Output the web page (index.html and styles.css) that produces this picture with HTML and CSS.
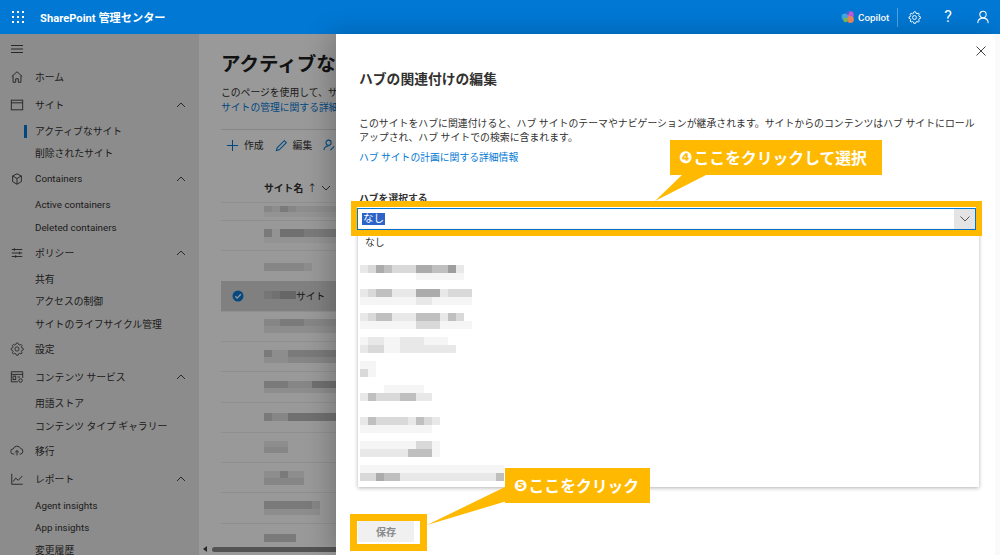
FILE: index.html
```html
<!DOCTYPE html>
<html lang="ja">
<head>
<meta charset="utf-8">
<title>SharePoint 管理センター</title>
<link rel="stylesheet" href="styles.css">
</head>
<body>
<header class="topbar">
  <svg class="waffle" width="14" height="14" viewBox="0 0 14 14"><g fill="#fff"><rect x="1" y="1" width="2" height="2"/><rect x="6" y="1" width="2" height="2"/><rect x="11" y="1" width="2" height="2"/><rect x="1" y="6" width="2" height="2"/><rect x="6" y="6" width="2" height="2"/><rect x="11" y="6" width="2" height="2"/><rect x="1" y="11" width="2" height="2"/><rect x="6" y="11" width="2" height="2"/><rect x="11" y="11" width="2" height="2"/></g></svg>
  <span class="brand">SharePoint 管理センター</span>
  <div class="top-actions">
    <svg class="copilot" width="14" height="14" viewBox="0 0 14 14"><circle cx="4" cy="7" r="3.4" fill="#3fa9e0"/><circle cx="9.5" cy="4.5" r="3.2" fill="#c45ad0"/><circle cx="9.5" cy="9.5" r="3.4" fill="#e8885a"/><circle cx="4.6" cy="10" r="2.2" fill="#7bb85a"/><circle cx="6.4" cy="2.8" r="1.8" fill="#2f6fd0"/></svg>
    <span class="copilot-label">Copilot</span>
    <span class="top-sep"></span>
    <svg class="top-gear" width="13" height="13" viewBox="0 0 16 16" fill="none" stroke="#fff" stroke-width="1.2"><path d="M8 1.2l1.3.2.5 1.7 1.3.6 1.6-.8 1.2 1.3-.8 1.6.5 1.2 1.7.6v1.8l-1.7.6-.5 1.2.8 1.6-1.2 1.3-1.6-.8-1.3.6-.5 1.7H7.2l-.5-1.7-1.3-.6-1.6.8-1.2-1.3.8-1.6-.5-1.2-1.7-.6V7.8l1.7-.6.5-1.2-.8-1.6 1.2-1.3 1.6.8 1.3-.6.5-1.7z" transform="translate(0 -.4)"/><circle cx="8" cy="8" r="2.4"/></svg>
    <span class="top-help">?</span>
    <svg class="top-user" width="12" height="14" viewBox="0 0 14 15" fill="none" stroke="#fff" stroke-width="1.2"><circle cx="7" cy="4.6" r="3.7"/><path d="M.8 14.6c.3-3.6 2.8-5.8 6.2-5.8s5.900 2.200 6.200 5.800"/></svg>
  </div>
</header>

<div class="app">
  <nav class="nav">
    <div class="nav-burger"><svg width="12" height="8" viewBox="0 0 12 8" fill="none" stroke="#444" stroke-width="1"><path d="M0 .5h12M0 4h12M0 7.500h12"/></svg></div>
    <div class="nav-item"><svg class="nav-ico" viewBox="0 0 16 16" fill="none" stroke="#444" stroke-width="1.100"><path d="M2 7.500L8 2l6 5.500M3.500 6.500V14h3v-4h3v4h3V6.500"/></svg>ホーム</div>
    <div class="nav-item"><svg class="nav-ico" viewBox="0 0 16 16" fill="none" stroke="#444" stroke-width="1.100"><rect x="1.500" y="2.500" width="13" height="11"/><path d="M1.500 5.500h13"/></svg>サイト<svg class="chev" viewBox="0 0 10 6" fill="none" stroke="#444" stroke-width="1"><path d="M1 5l4-4 4 4"/></svg></div>
    <div class="sub-list">
      <div class="sub active">アクティブなサイト</div>
      <div class="sub">削除されたサイト</div>
    </div>
    <div class="nav-item"><svg class="nav-ico" viewBox="0 0 16 16" fill="none" stroke="#444" stroke-width="1.100"><path d="M8 2l5 2.500v6.500L8 14l-5-3V4.500zM3 4.500L8 7.500l5-3M8 7.500V14"/></svg>Containers<svg class="chev" viewBox="0 0 10 6" fill="none" stroke="#444" stroke-width="1"><path d="M1 5l4-4 4 4"/></svg></div>
    <div class="sub-list">
      <div class="sub">Active containers</div>
      <div class="sub">Deleted containers</div>
    </div>
    <div class="nav-item"><svg class="nav-ico" viewBox="0 0 16 16" fill="none" stroke="#444" stroke-width="1.100"><path d="M2 4h12M2 8h12M2 12h12"/><path d="M5 2.500v3M11 6.500v3M6.500 10.500v3"/></svg>ポリシー<svg class="chev" viewBox="0 0 10 6" fill="none" stroke="#444" stroke-width="1"><path d="M1 5l4-4 4 4"/></svg></div>
    <div class="sub-list">
      <div class="sub">共有</div>
      <div class="sub">アクセスの制御</div>
      <div class="sub">サイトのライフサイクル管理</div>
    </div>
    <div class="nav-item"><svg class="nav-ico" viewBox="0 0 16 16" fill="none" stroke="#444" stroke-width="1"><path d="M8 1.500l1.300.2.500 1.600 1.300.6 1.500-.8 1.200 1.300-.8 1.500.5 1.200 1.600.6v1.800l-1.600.6-.5 1.200.8 1.500-1.200 1.300-1.500-.8-1.300.6-.5 1.600H7.200l-.5-1.600-1.300-.6-1.500.8-1.200-1.300.8-1.500-.5-1.200-1.600-.6V7.700l1.600-.6.5-1.200-.8-1.500 1.200-1.300 1.500.8 1.300-.6.500-1.600z" transform="translate(0 -.4)"/><circle cx="8" cy="8" r="2.400"/></svg>設定</div>
    <div class="nav-item"><svg class="nav-ico" viewBox="0 0 16 16" fill="none" stroke="#444" stroke-width="1.100"><path d="M9 13.500H1.500V2h13v7"/><path d="M1.500 5h13"/><rect x="3.500" y="7" width="3" height="4"/><path d="M8.500 8h3"/><circle cx="12" cy="12" r="2"/></svg>コンテンツ サービス<svg class="chev" viewBox="0 0 10 6" fill="none" stroke="#444" stroke-width="1"><path d="M1 5l4-4 4 4"/></svg></div>
    <div class="sub-list">
      <div class="sub">用語ストア</div>
      <div class="sub">コンテンツ タイプ ギャラリー</div>
    </div>
    <div class="nav-item"><svg class="nav-ico" viewBox="0 0 16 16" fill="none" stroke="#444" stroke-width="1.100"><path d="M5 11.500H4a3 3 0 0 1-.3-6A4.500 4.500 0 0 1 12 5 3.300 3.300 0 0 1 12 11.500h-1"/><path d="M8 13V7.500M5.800 9.500L8 7.500l2.200 2"/></svg>移行</div>
    <div class="nav-item"><svg class="nav-ico" viewBox="0 0 16 16" fill="none" stroke="#444" stroke-width="1.100"><path d="M2 2v12h12.500M3.500 11l3-4 3 2.500 4.500-5"/></svg>レポート<svg class="chev" viewBox="0 0 10 6" fill="none" stroke="#444" stroke-width="1"><path d="M1 5l4-4 4 4"/></svg></div>
    <div class="sub-list">
      <div class="sub">Agent insights</div>
      <div class="sub">App insights</div>
      <div class="sub">変更履歴</div>
    </div>
  </nav>

  <main class="main">
    <h1 class="page-title">アクティブなサイト</h1>
    <p class="page-desc">このページを使用して、サイトを管理します。</p>
    <a class="page-link">サイトの管理に関する詳細情報</a>
    <div class="toolbar">
      <span class="tool"><svg class="tool-ico" viewBox="0 0 14 14" fill="none" stroke="#0078d4" stroke-width="1.100"><path d="M7 1v12M1 7h12"/></svg>作成</span>
      <span class="tool"><svg class="tool-ico" viewBox="0 0 14 14" fill="none" stroke="#0078d4" stroke-width="1.100"><path d="M1.500 12.500l.8-3L10 1.800l2.200 2.200-7.700 7.700z"/></svg>編集</span>
      <span class="tool"><svg class="tool-ico" viewBox="0 0 14 14" fill="none" stroke="#0078d4" stroke-width="1.100"><circle cx="6" cy="4" r="2.800"/><path d="M1 12c.4-3 2.400-4.500 5-4.500M8 12l4-4"/></svg></span>
    </div>
    <div class="table-head">サイト名 <span class="sort">↑</span> <svg class="head-chev" viewBox="0 0 10 6" fill="none" stroke="#444" stroke-width="1"><path d="M1 1l4 4 4-4"/></svg></div>
    <div class="rows">
      <div class="row row-first"><svg class="mos" width="80" height="16" viewBox="0 0 80 16"><rect class="c" y="2" width="8" height="6"/><rect class="b" x="8" y="2" width="8" height="6"/><rect class="d" x="16" y="2" width="8" height="6"/><rect class="c" x="24" y="2" width="8" height="6"/><rect class="b" x="32" y="2" width="40" height="6"/><rect class="a" y="8" width="72" height="5"/></svg></div>
      <div class="row"><svg class="mos" width="80" height="16" viewBox="0 0 80 16"><rect class="d" y="1" width="8" height="8"/><rect class="a" x="8" y="1" width="8" height="8"/><rect class="e" x="16" y="1" width="24" height="8"/><rect class="d" x="40" y="1" width="32" height="8"/><rect class="a" y="9" width="72" height="6"/></svg></div>
      <div class="row"><svg class="mos" width="80" height="16" viewBox="0 0 80 16"><rect class="c" y="5" width="40" height="8"/><rect class="b" x="40" y="5" width="8" height="8"/></svg></div>
      <div class="row row-selected">
        <svg class="check" width="12" height="12" viewBox="0 0 12 12"><circle cx="6" cy="6" r="5.500" fill="#0c78d4"/><path d="M3.300 6.200l1.900 1.900 3.600-3.800" fill="none" stroke="#fff" stroke-width="1.300"/></svg>
        <svg class="mos mos-sel" width="32" height="16" viewBox="0 0 32 16"><rect class="b" y="3" width="8" height="8"/><rect class="c" x="8" y="3" width="8" height="8"/><rect class="d" x="16" y="3" width="16" height="8"/></svg>
        <span class="row-text">サイト</span>
      </div>
      <div class="row"><svg class="mos" width="80" height="16" viewBox="0 0 80 16"><rect class="c" y="1" width="16" height="7"/><rect class="d" x="16" y="1" width="24" height="7"/><rect class="c" x="40" y="1" width="32" height="7"/><rect class="b" y="8" width="72" height="7"/></svg></div>
      <div class="row"><svg class="mos" width="80" height="16" viewBox="0 0 80 16"><rect class="d" y="1" width="8" height="7"/><rect class="b" x="8" y="1" width="16" height="7"/><rect class="d" x="24" y="1" width="48" height="7"/><rect class="b" y="8" width="24" height="6"/><rect class="c" x="24" y="8" width="48" height="6"/></svg></div>
      <div class="row"><svg class="mos" width="80" height="16" viewBox="0 0 80 16"><rect class="d" y="2" width="24" height="7"/><rect class="c" x="24" y="2" width="24" height="7"/><rect class="e" x="48" y="2" width="24" height="7"/><rect class="b" y="9" width="72" height="5"/></svg></div>
      <div class="row"><svg class="mos" width="80" height="16" viewBox="0 0 80 16"><rect class="d" y="4" width="8" height="8"/><rect class="c" x="8" y="4" width="16" height="8"/><rect class="e" x="24" y="4" width="48" height="8"/></svg></div>
      <div class="row"><svg class="mos" width="80" height="16" viewBox="0 0 80 16"><rect class="b" y="2" width="24" height="6"/><rect class="c" y="8" width="24" height="6"/></svg></div>
      <div class="row"><svg class="mos" width="80" height="16" viewBox="0 0 80 16"><rect class="b" y="1" width="16" height="7"/><rect class="d" x="16" y="1" width="8" height="7"/><rect class="b" x="24" y="1" width="16" height="7"/><rect class="c" y="8" width="40" height="7"/></svg></div>
      <div class="row"><svg class="mos" width="80" height="16" viewBox="0 0 80 16"><rect class="d" y="1" width="48" height="8"/><rect class="c" x="48" y="1" width="8" height="8"/><rect class="b" y="9" width="56" height="6"/></svg></div>
      <div class="row"><svg class="mos" width="80" height="16" viewBox="0 0 80 16"><rect class="d" y="4" width="32" height="8"/></svg></div>
    </div>
    <div class="hscroll"><span class="hs-arrow"></span><span class="hs-thumb"></span></div>
  </main>
</div>

<div class="scrim"></div>

<aside class="panel">
  <svg class="close" width="10" height="10" viewBox="0 0 10 10" fill="none" stroke="#444" stroke-width="1"><path d="M.5.500l9 9M9.500.500l-9 9"/></svg>
  <h2 class="panel-title">ハブの関連付けの編集</h2>
  <p class="panel-text">このサイトをハブに関連付けると、ハブ サイトのテーマやナビゲーションが継承されます。サイトからのコンテンツはハブ サイトにロールアップされ、ハブ サイトでの検索に含まれます。</p>
  <a class="panel-link">ハブ サイトの計画に関する詳細情報</a>
  <label class="field-label">ハブを選択する</label>
  <div class="combo">
    <span class="combo-value"><span class="combo-sel">なし</span></span>
    <span class="combo-btn"><svg width="10" height="6" viewBox="0 0 10 6" fill="none" stroke="#555" stroke-width="1"><path d="M.5.500L5 5 9.500.500"/></svg></span>
  </div>
  <ul class="options">
    <li class="option option-first">なし</li>
    <li class="option"><svg class="m-row" width="160" height="24" viewBox="0 0 160 24"><rect class="b" y="0" width="8" height="8"/><rect class="c" x="8" y="0" width="8" height="8"/><rect class="e" x="16" y="0" width="8" height="8"/><rect class="d" x="24" y="0" width="8" height="8"/><rect class="c" x="32" y="0" width="24" height="8"/><rect class="e" x="56" y="0" width="16" height="8"/><rect class="d" x="72" y="0" width="16" height="8"/><rect class="f" x="88" y="0" width="8" height="8"/><rect class="b" x="96" y="0" width="8" height="8"/><rect class="a" x="56" y="8" width="48" height="7"/></svg></li>
    <li class="option"><svg class="m-row" width="160" height="24" viewBox="0 0 160 24"><rect class="b" y="0" width="8" height="8"/><rect class="c" x="8" y="0" width="8" height="8"/><rect class="d" x="16" y="0" width="16" height="8"/><rect class="b" x="32" y="0" width="24" height="8"/><rect class="e" x="56" y="0" width="24" height="8"/><rect class="b" x="80" y="0" width="8" height="8"/><rect class="c" x="88" y="0" width="24" height="8"/><rect class="a" y="8" width="56" height="8"/><rect class="b" x="56" y="8" width="16" height="8"/><rect class="a" x="72" y="8" width="40" height="8"/></svg></li>
    <li class="option"><svg class="m-row" width="160" height="24" viewBox="0 0 160 24"><rect class="b" y="0" width="8" height="8"/><rect class="c" x="8" y="0" width="8" height="8"/><rect class="d" x="16" y="0" width="16" height="8"/><rect class="b" x="32" y="0" width="24" height="8"/><rect class="d" x="56" y="0" width="24" height="8"/><rect class="b" x="80" y="0" width="8" height="8"/><rect class="d" x="88" y="0" width="8" height="8"/><rect class="c" x="96" y="0" width="8" height="8"/><rect class="a" y="8" width="56" height="8"/><rect class="c" x="56" y="8" width="24" height="8"/><rect class="a" x="80" y="8" width="32" height="8"/></svg></li>
    <li class="option"><svg class="m-row" width="160" height="24" viewBox="0 0 160 24"><rect class="a" y="0" width="8" height="8"/><rect class="b" x="8" y="0" width="16" height="8"/><rect class="a" x="24" y="0" width="16" height="8"/><rect class="b" x="40" y="0" width="24" height="8"/><rect class="a" x="64" y="0" width="24" height="8"/><rect class="b" y="8" width="8" height="8"/><rect class="c" x="8" y="8" width="16" height="8"/><rect class="a" x="24" y="8" width="16" height="8"/><rect class="b" x="40" y="8" width="56" height="8"/></svg></li>
    <li class="option"><svg class="m-row" width="160" height="24" viewBox="0 0 160 24"><rect class="a" y="0" width="16" height="8"/><rect class="c" y="8" width="8" height="8"/><rect class="a" x="8" y="8" width="8" height="8"/></svg></li>
    <li class="option"><svg class="m-row" width="160" height="24" viewBox="0 0 160 24"><rect class="a" x="24" y="0" width="40" height="8"/><rect class="b" y="8" width="8" height="8"/><rect class="d" x="8" y="8" width="8" height="8"/><rect class="c" x="16" y="8" width="24" height="8"/><rect class="d" x="40" y="8" width="16" height="8"/><rect class="b" x="56" y="8" width="16" height="8"/></svg></li>
    <li class="option"><svg class="m-row" width="160" height="24" viewBox="0 0 160 24"><rect class="b" y="8" width="8" height="8"/><rect class="d" x="8" y="8" width="8" height="8"/><rect class="c" x="16" y="8" width="32" height="8"/><rect class="b" x="48" y="8" width="8" height="8"/><rect class="d" x="56" y="8" width="8" height="8"/><rect class="c" x="64" y="8" width="8" height="8"/><rect class="b" x="72" y="8" width="8" height="8"/><rect class="a" y="16" width="72" height="8"/></svg></li>
    <li class="option"><svg class="m-row" width="160" height="24" viewBox="0 0 160 24"><rect class="a" y="8" width="56" height="8"/><rect class="c" x="56" y="8" width="16" height="8"/><rect class="a" x="72" y="8" width="8" height="8"/><rect class="b" y="16" width="48" height="8"/><rect class="d" x="48" y="16" width="24" height="8"/><rect class="a" x="72" y="16" width="8" height="8"/></svg></li>
    <li class="option"><svg class="m-row" width="160" height="24" viewBox="0 0 160 24"><rect class="a" y="8" width="144" height="8"/><rect class="c" y="16" width="16" height="8"/><rect class="e" x="16" y="16" width="8" height="8"/><rect class="d" x="24" y="16" width="16" height="8"/><rect class="b" x="40" y="16" width="96" height="8"/><rect class="d" x="136" y="16" width="8" height="8"/></svg></li>
  </ul>
  <div class="panel-foot"><button class="save" disabled>保存</button></div>
  <span class="panel-track"></span>
</aside>

<div class="frame frame-combo"></div>
<div class="frame frame-save"></div>
<div class="tail tail-4"></div>
<div class="tail tail-5"></div>
<div class="callout callout-4"><span class="num">❹</span>ここをクリックして選択</div>
<div class="callout callout-5"><span class="num">❺</span>ここをクリック</div>
</body>
</html>
```

FILE: styles.css
```css
* { box-sizing: border-box; }
html, body { margin: 0; height: 100%; }
body {
  width: 1000px;
  height: 555px;
  overflow: hidden;
  position: relative;
  display: flex;
  flex-direction: column;
  font-family: Roboto, "Noto Sans CJK JP", sans-serif;
  font-size: 9.800px;
  color: #323130;
  background: #fff;
}

/* top bar */
.topbar {
  height: 34px;
  flex: none;
  display: flex;
  align-items: center;
  padding: 0 11px;
  background: #0078d4;
  color: #fff;
}
.waffle { flex: none; }
.brand { margin-left: 15px; font-size: 11.200px; font-weight: 700; white-space: nowrap; }
.top-actions { margin-left: auto; display: flex; align-items: center; }
.copilot { margin-right: 3px; }
.copilot-label { width: 30px; font-size: 9.800px; font-weight: 500; white-space: nowrap; }
.top-sep { width: 1px; height: 19px; margin: 0 10px 0 9px; background: #4fa3e3; }
.top-gear { margin-right: 20px; }
.top-help { width: 14px; margin-right: 22px; text-align: center; font-size: 16px; line-height: 1; }

/* app shell */
.app { flex: 1; display: flex; min-height: 0; }
.nav { width: 199px; flex: none; background: #eaeaea; overflow: hidden; }
.nav-burger { height: 29px; padding-left: 11px; display: flex; align-items: center; }
.nav-item {
  height: 28px;
  padding: 0 13px 0 10px;
  display: flex;
  align-items: center;
  gap: 11px;
  white-space: nowrap;
}
.nav-ico { width: 14px; height: 14px; flex: none; }
.chev { width: 10px; height: 6px; margin-left: auto; }
.sub-list { padding: .5px 0 .25px; }
.sub {
  position: relative;
  height: 22.600px;
  padding-left: 35px;
  display: flex;
  align-items: center;
  white-space: nowrap;
}
.active::before {
  content: "";
  position: absolute;
  left: 24px;
  top: 5px;
  width: 3px;
  height: 13px;
  background: #0078d4;
}

/* main page */
.main { position: relative; flex: 1; min-width: 0; margin-right: 664px; padding: 17px 0 0 22px; overflow: hidden; background: #fff; }
.page-title { margin: 0; font-size: 19.500px; line-height: 28px; font-weight: 700; color: #201f1e; white-space: nowrap; }
.page-desc { margin: 6px 0 0; line-height: 15px; white-space: nowrap; }
.page-link { display: block; line-height: 15px; color: #0078d4; white-space: nowrap; }
.toolbar {
  margin-top: 14px;
  height: 31px;
  padding-left: 5px;
  border-top: 1px solid #e0e0e0;
  display: flex;
  align-items: center;
  gap: 11px;
  white-space: nowrap;
}
.tool { display: flex; align-items: center; gap: 5px; flex: none; }
.tool-ico { width: 13px; height: 13px; }
.table-head {
  height: 28px;
  margin-top: 14px;
  padding-left: 43px;
  display: flex;
  align-items: center;
  gap: 4px;
  font-weight: 700;
  white-space: nowrap;
}
.sort { font-weight: 400; }
.head-chev { width: 10px; height: 6px; }
.rows { width: 600px; }
.row {
  height: 30.250px;
  padding-left: 43px;
  display: flex;
  align-items: center;
  border-top: 1px solid #eee;
}
.row-first { height: 18px; }
.row-selected { background: #d6d6d6; padding-left: 11px; border-top: 0; }
.check { flex: none; margin-right: 20px; }
.mos { flex: none; opacity: .8; }
.row-text { color: #201f1e; }
.a { fill-opacity: .04; }
.b { fill-opacity: .09; }
.c { fill-opacity: .15; }
.d { fill-opacity: .25; }
.e { fill-opacity: .33; }
.f { fill-opacity: .38; }
.hscroll {
  position: absolute;
  left: 4px;
  right: 0;
  bottom: 3px;
  height: 6px;
  display: flex;
  align-items: center;
}
.hs-arrow {
  width: 0;
  height: 0;
  margin-right: 5px;
  border: 3px solid transparent;
  border-left: 0;
  border-right: 4px solid #444;
}
.hs-thumb { flex: 1; height: 5px; border-radius: 3px 0 0 3px; background: #8a8a8a; }

/* dim layer */
.scrim { position: absolute; left: 0; right: 0; top: 34px; bottom: 0; background: rgba(0, 0, 0, .4); }

/* side panel */
.panel {
  position: absolute;
  left: 336px;
  right: 0;
  top: 34px;
  bottom: 0;
  padding: 35px 20px 0 23px;
  background: #fff;
  box-shadow: -6px 0 24px rgba(0, 0, 0, .22);
}
.close { position: absolute; right: 14px; top: 12px; }
.panel-title { margin: 0; font-size: 13.800px; line-height: 20px; font-weight: 700; color: #323130; }
.panel-text { margin: 28px 0 0; line-height: 14px; font-size: 9.900px; }
.panel-link { display: block; margin-top: 5px; line-height: 15px; color: #0078d4; }
.field-label { display: block; margin-top: 26px; line-height: 15px; font-weight: 700; }
.combo {
  margin: 2px 4px 0 -2px;
  height: 22px;
  display: flex;
  align-items: stretch;
  border: 1.500px solid #0078d4;
  background: #fff;
}
.combo-value { flex: 1; padding-left: 4px; display: flex; align-items: center; font-size: 10.500px; }
.combo-sel { background: #2c63c8; color: #fff; line-height: 12px; padding: 0 1px; }
.combo-btn { width: 21px; display: flex; align-items: center; justify-content: center; background: #e4e4e4; }
.options {
  list-style: none;
  margin: 0 1px 0 -1px;
  padding: 0 0 6px 7px;
  background: #fff;
  box-shadow: 0 1px 4px rgba(0, 0, 0, .3);
}
.option { height: 24px; }
.option-first { height: 35px; padding-top: 6px; line-height: 13px; }
.m-row { display: block; margin-left: -5px; }

.panel-foot { margin-top: 33px; margin-left: -1px; }
.save {
  display: block;
  width: 56px;
  height: 22px;
  padding: 0;
  border: 0;
  background: #f0f0f0;
  color: #8a8a8a;
  font: 700 10px Roboto, "Noto Sans CJK JP", sans-serif;
}
.panel-track { position: absolute; right: 0; top: 0; bottom: 0; width: 5px; background: #fafafa; }

/* annotations */
.frame { position: absolute; border: 6.500px solid #ffb900; }
.frame-combo { left: 351px; top: 201px; width: 631px; height: 35px; }
.frame-save { left: 350px; top: 514px; width: 77px; height: 37px; border-width: 7px; }
.tail { position: absolute; background: #ffb900; }
.tail-4 { left: 655px; top: 174px; width: 55px; height: 28px; clip-path: polygon(28px 0, 53px 0, 0 27px); }
.tail-5 { left: 427px; top: 486px; width: 80px; height: 39px; clip-path: polygon(80px 0, 80px 15px, 0 39px); }
.callout {
  position: absolute;
  display: flex;
  align-items: center;
  height: 35px;
  padding-left: 9px;
  background: #ffb900;
  color: #fff;
  font-family: "Noto Sans CJK JP", sans-serif;
  font-size: 15.800px;
  font-weight: 700;
  white-space: nowrap;
}
.num { font-family: "DejaVu Sans", sans-serif; font-size: 16px; margin-right: 1px; }
.callout-4 { left: 670px; top: 140px; width: 212px; }
.callout-5 { left: 505px; top: 468px; width: 145px; }
```
